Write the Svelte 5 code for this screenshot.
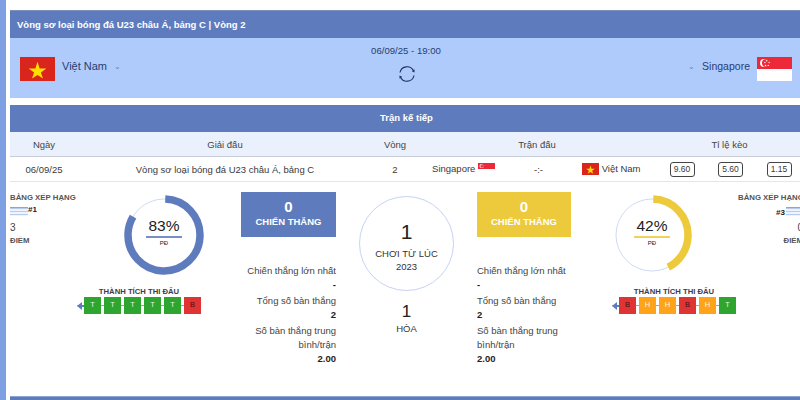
<script>
  const form = {
    home: ['T', 'T', 'T', 'T', 'T', 'B'],
    away: ['B', 'H', 'H', 'B', 'H', 'T']
  };
  const stats = [
    { label: 'Chiến thắng lớn nhất', value: '-' },
    { label: 'Tổng số bàn thắng', value: '2' },
    { label: 'Số bàn thắng trung bình/trận', value: '2.00' }
  ];
  const odds = ['9.60', '5.60', '1.15'];
</script>

{#snippet vnFlag(cls)}
  <svg class={cls} viewBox="0 0 30 20" preserveAspectRatio="none">
    <rect width="30" height="20" fill="#da251d" />
    <polygon fill="#ffdf00" points="15,4 16.8,9.5 22.6,9.5 17.9,12.9 19.7,18 15,15 10.3,18 12.1,12.9 7.4,9.5 13.2,9.5" />
  </svg>
{/snippet}

{#snippet sgFlag(cls)}
  <svg class={cls} viewBox="0 0 30 20" preserveAspectRatio="none">
    <rect width="30" height="20" fill="#fff" />
    <rect width="30" height="10" fill="#ed2939" />
    <circle cx="6" cy="5" r="3.4" fill="#fff" />
    <circle cx="7.3" cy="5" r="3.1" fill="#ed2939" />
    <circle cx="8.4" cy="3.2" r="0.6" fill="#fff" />
    <circle cx="10.4" cy="4.6" r="0.6" fill="#fff" />
    <circle cx="9.6" cy="7" r="0.6" fill="#fff" />
    <circle cx="7.3" cy="7" r="0.6" fill="#fff" />
    <circle cx="6.8" cy="4.6" r="0.6" fill="#fff" />
  </svg>
{/snippet}

{#snippet ring(pct, color)}
  <div class="ring">
    <svg width="80" height="80" viewBox="0 0 80 80">
      <circle cx="40" cy="40" r="36" fill="none" stroke="#cfdaf5" stroke-width="1" />
      <circle
        cx="40" cy="40" r="36" fill="none" stroke={color} stroke-width="7.5"
        pathLength="100" stroke-dasharray="{pct} 100" transform="rotate(-88 40 40)"
      />
    </svg>
    <div class="ring-text">
      <span class="pct">{pct}%</span>
      <span class="rule" style="background:{color}"></span>
      <span class="pd">PĐ</span>
    </div>
  </div>
{/snippet}

{#snippet history(items)}
  <div class="history">
    <div class="history-title">THÀNH TÍCH THI ĐẤU</div>
    <div class="chips">
      <svg class="arrow" width="7" height="8" viewBox="0 0 7 8"><polygon points="0,4 5,0 5,8" fill="#5e7cbd" /><rect x="4" y="3" width="3" height="2" fill="#5e7cbd" /></svg>
      {#each items as r}
        <span class="chip {r}">{r}</span>
      {/each}
    </div>
  </div>
{/snippet}

{#snippet lines()}
  <span class="lines"></span>
{/snippet}

<div class="page">
  <div class="stripe"></div>
  <div class="main">
    <div class="title-bar">Vòng sơ loại bóng đá U23 châu Á, bảng C | Vòng 2</div>

    <div class="hero">
      <div class="team">
        {@render vnFlag('flag-lg')}
        <span class="team-name">Việt Nam</span>
        <span class="chev">⌄</span>
      </div>
      <div class="kick">
        <div class="kick-date">06/09/25 - 19:00</div>
        <svg class="sync" width="18" height="18" viewBox="0 0 18 18" fill="none" stroke="#1f3266" stroke-width="1.2">
          <path d="M2 7.5A7.2 7.2 0 0 1 15.6 6" />
          <path d="M16 10.5A7.2 7.2 0 0 1 2.4 12" />
          <polygon points="16.6,7.4 13.8,6.2 16.4,4.2" fill="#1f3266" stroke="none" />
          <polygon points="1.4,10.6 4.2,11.8 1.6,13.8" fill="#1f3266" stroke="none" />
        </svg>
      </div>
      <div class="team team-right">
        <span class="chev">⌄</span>
        <span class="team-name sg">Singapore</span>
        {@render sgFlag('flag-lg')}
      </div>
    </div>

    <div class="section-head">Trận kế tiếp</div>

    <div class="table-row thead">
      <div>Ngày</div>
      <div>Giải đấu</div>
      <div>Vòng</div>
      <div>Trận đấu</div>
      <div>Tỉ lệ kèo</div>
    </div>
    <div class="table-row tbody">
      <div>06/09/25</div>
      <div>Vòng sơ loại bóng đá U23 châu Á, bảng C</div>
      <div>2</div>
      <div class="match">
        <span class="match-home">Singapore {@render sgFlag('flag-sm')}</span>
        <span class="score">-:-</span>
        <span class="match-away">{@render vnFlag('flag-sm')} Việt Nam</span>
      </div>
      <div class="odds">
        {#each odds as o}
          <span class="odd">{o}</span>
        {/each}
      </div>
    </div>

    <div class="detail">
      <div class="standing">
        <div class="standing-title">BẢNG XẾP HẠNG</div>
        <div class="rank">{@render lines()}<b>#1</b></div>
        <div class="points">3</div>
        <div class="points-label">ĐIỂM</div>
      </div>

      <div class="side side-home">
        {@render ring(83, '#5e7cbd')}
        {@render history(form.home)}
      </div>

      <div class="team-stats home-stats">
        <div class="card blue"><strong>0</strong><span>CHIẾN THẮNG</span></div>
        <div class="stat-list">
          {#each stats as s}
            <div>{s.label}<b>{s.value}</b></div>
          {/each}
        </div>
      </div>

      <div class="middle">
        <div class="played">
          <span class="played-num">1</span>
          <span>CHƠI TỪ LÚC</span>
          <span>2023</span>
        </div>
        <div class="draw-num">1</div>
        <div class="draw-label">HÒA</div>
      </div>

      <div class="team-stats">
        <div class="card yellow"><strong>0</strong><span>CHIẾN THẮNG</span></div>
        <div class="stat-list">
          {#each stats as s}
            <div>{s.label}<b>{s.value}</b></div>
          {/each}
        </div>
      </div>

      <div class="side side-away">
        {@render ring(42, '#edc93c')}
        {@render history(form.away)}
      </div>

      <div class="standing standing-right">
        <div class="standing-title">BẢNG XẾP HẠNG</div>
        <div class="rank"><b>#3</b>{@render lines()}</div>
        <div class="points">0</div>
        <div class="points-label">ĐIỂM</div>
      </div>
    </div>

    <div class="bottom-bar"></div>
  </div>
</div>

<style>
  :global(body) {
    margin: 0;
    background: #fff;
    font-family: "Liberation Sans", Arial, sans-serif;
    color: #333;
  }
  .page {
    display: flex;
    width: 800px;
    height: 400px;
    overflow: hidden;
  }
  .stripe {
    flex: none;
    width: 6px;
    background: #7f9fe3;
  }
  .main {
    flex: none;
    width: 793px;
    margin-left: 4px;
    padding-top: 10px;
  }
  .title-bar {
    height: 28px;
    line-height: 27px;
    padding-left: 7px;
    box-sizing: border-box;
    background: #5e7cbd;
    border-top: 1px solid #7d90bd;
    color: #fff;
    font-size: 9.5px;
    font-weight: bold;
  }
  .hero {
    display: flex;
    justify-content: space-between;
    height: 60px;
    padding: 0 11px 0 10px;
    box-sizing: border-box;
    background: #aecbfb;
    border-bottom: 1px solid #c2c8d2;
    color: #2a3d70;
  }
  .team {
    display: flex;
    align-items: center;
    width: 150px;
    padding-top: 3px;
  }
  .team-right {
    justify-content: flex-end;
  }
  .flag-lg {
    width: 35px;
    height: 24px;
    flex: none;
  }
  .team-name {
    font-size: 11px;
    margin: 0 7px;
    position: relative;
    top: -3px;
  }
  .team-name.sg {
    font-size: 10.5px;
  }
  .chev {
    font-size: 8px;
    color: #6c83b0;
    position: relative;
    top: -3px;
  }
  .kick {
    display: flex;
    flex-direction: column;
    align-items: center;
    padding-top: 7px;
  }
  .kick-date {
    font-size: 9.6px;
    line-height: 12px;
  }
  .sync {
    margin: 8px 0 0 3px;
  }
  .section-head {
    margin-top: 7px;
    height: 27px;
    line-height: 26px;
    text-align: center;
    background: #5e7cbd;
    color: #fff;
    font-size: 9.5px;
    font-weight: bold;
  }
  .table-row {
    display: grid;
    grid-template-columns: 68px 294px 46px 238px 147px;
    align-items: center;
    text-align: center;
    font-size: 9.5px;
    color: #3a3a3a;
    box-sizing: border-box;
  }
  .thead {
    height: 25px;
    background: #eaf1fd;
    border-bottom: 1px solid #c7ccd6;
    color: #444;
  }
  .tbody {
    height: 25px;
    border-bottom: 1px solid #e6e6e6;
  }
  .match {
    display: grid;
    grid-template-columns: 77px 87px 74px;
    align-items: center;
  }
  .match-home {
    text-align: right;
  }
  .match-away {
    text-align: left;
    white-space: nowrap;
  }
  .flag-sm {
    width: 17px;
    height: 12px;
    vertical-align: -3px;
  }
  .odds {
    display: flex;
    justify-content: center;
    gap: 23.5px;
    padding-left: 2px;
  }
  .odd {
    width: 25px;
    height: 15px;
    line-height: 13px;
    box-sizing: border-box;
    border: 1px solid #444;
    border-radius: 3px;
    font-size: 8.5px;
  }
  .detail {
    display: grid;
    grid-template-columns: 65px 166px 95px 141px 94px 167px 65px;
    height: 214px;
    box-sizing: border-box;
  }
  .standing {
    padding-top: 11px;
    font-size: 7.8px;
    color: #444;
    white-space: nowrap;
  }
  .standing-title {
    font-weight: bold;
    line-height: 10px;
    color: #555;
  }
  .rank {
    display: flex;
    align-items: flex-start;
    height: 12px;
    margin-top: 3px;
    line-height: 8px;
    font-size: 8px;
    color: #222;
  }
  .lines {
    display: block;
    flex: none;
    width: 18px;
    height: 9px;
    margin-top: 1px;
    background: repeating-linear-gradient(#b9ccef 0 1px, #eef3fd 1px 3px);
    border-top: 1px solid #8fa5cf;
    box-sizing: border-box;
  }
  .points {
    font-size: 10px;
    line-height: 12px;
    margin-top: 4px;
  }
  .points-label {
    font-weight: bold;
    line-height: 10px;
    margin-top: 2px;
    color: #555;
  }
  .standing-right {
    text-align: right;
  }
  .standing-right .rank {
    justify-content: flex-start;
    padding-left: 38px;
  }
  .standing-right .rank b {
    margin-top: 3px;
  }
  .standing-right .lines {
    margin-left: 1px;
  }
  .side {
    padding-top: 13px;
  }
  .side-home .ring {
    margin-left: 49px;
  }
  .side-home .history {
    margin-left: 2px;
  }
  .side-away {
    padding-left: 41px;
  }
  .ring {
    display: grid;
    width: 80px;
    height: 80px;
  }
  .ring svg,
  .ring-text {
    grid-area: 1 / 1;
  }
  .ring-text {
    display: flex;
    flex-direction: column;
    align-items: center;
    padding-top: 22px;
    color: #222;
  }
  .pct {
    font-size: 15.5px;
    line-height: 18px;
  }
  .rule {
    width: 36px;
    height: 1.5px;
    margin-top: 1px;
    opacity: 0.85;
  }
  .pd {
    font-size: 6px;
    line-height: 8px;
    margin-top: 1.5px;
  }
  .history {
    width: 124px;
    margin-top: 12px;
  }
  .history-title {
    text-align: center;
    font-size: 7.7px;
    font-weight: bold;
    line-height: 10px;
    color: #3c3c4a;
    white-space: nowrap;
  }
  .chips {
    display: flex;
    align-items: center;
    gap: 3px;
    background: linear-gradient(#8fa3d0, #8fa3d0) 0 50% / 100% 1px no-repeat;
  }
  .arrow {
    margin-right: -3px;
    flex: none;
  }
  .chip {
    width: 17px;
    height: 17px;
    line-height: 16px;
    text-align: center;
    font-size: 7.5px;
    flex: none;
  }
  .T {
    background: #2ea52e;
    color: #dff3df;
  }
  .B {
    background: #e03434;
    color: #4a1010;
  }
  .H {
    background: #ffa31a;
    color: #fff3dc;
  }
  .team-stats {
    padding-top: 10px;
  }
  .card {
    display: flex;
    flex-direction: column;
    align-items: center;
    height: 45px;
    padding-top: 7px;
    box-sizing: border-box;
    color: #fff;
    font-weight: bold;
    font-size: 9.5px;
    line-height: 14px;
  }
  .card strong {
    font-size: 15px;
    line-height: 16px;
  }
  .blue {
    background: #5e7cbd;
  }
  .yellow {
    background: #edc93c;
  }
  .stat-list {
    display: flex;
    flex-direction: column;
    gap: 2px;
    margin-top: 27px;
    font-size: 9.5px;
    line-height: 14px;
    color: #444;
  }
  .stat-list b {
    display: block;
    color: #222;
  }
  .home-stats .stat-list {
    text-align: right;
  }
  .middle {
    display: flex;
    flex-direction: column;
    align-items: center;
    padding-top: 14px;
    color: #333;
  }
  .played {
    display: flex;
    flex-direction: column;
    align-items: center;
    width: 95px;
    height: 95px;
    box-sizing: border-box;
    padding-top: 22px;
    border: 1px solid #c5d3f5;
    border-radius: 50%;
    font-size: 9.5px;
    line-height: 12.5px;
  }
  .played-num {
    font-size: 21px;
    line-height: 26px;
    margin-bottom: 3px;
    color: #222;
  }
  .draw-num {
    margin-top: 11px;
    font-size: 17px;
    line-height: 20px;
    color: #222;
  }
  .draw-label {
    font-size: 9.5px;
    line-height: 14px;
    margin-top: 0;
  }
  .bottom-bar {
    height: 8px;
    background: #5e7cbd;
    border-top: 1px solid #8ea2d4;
  }
</style>
